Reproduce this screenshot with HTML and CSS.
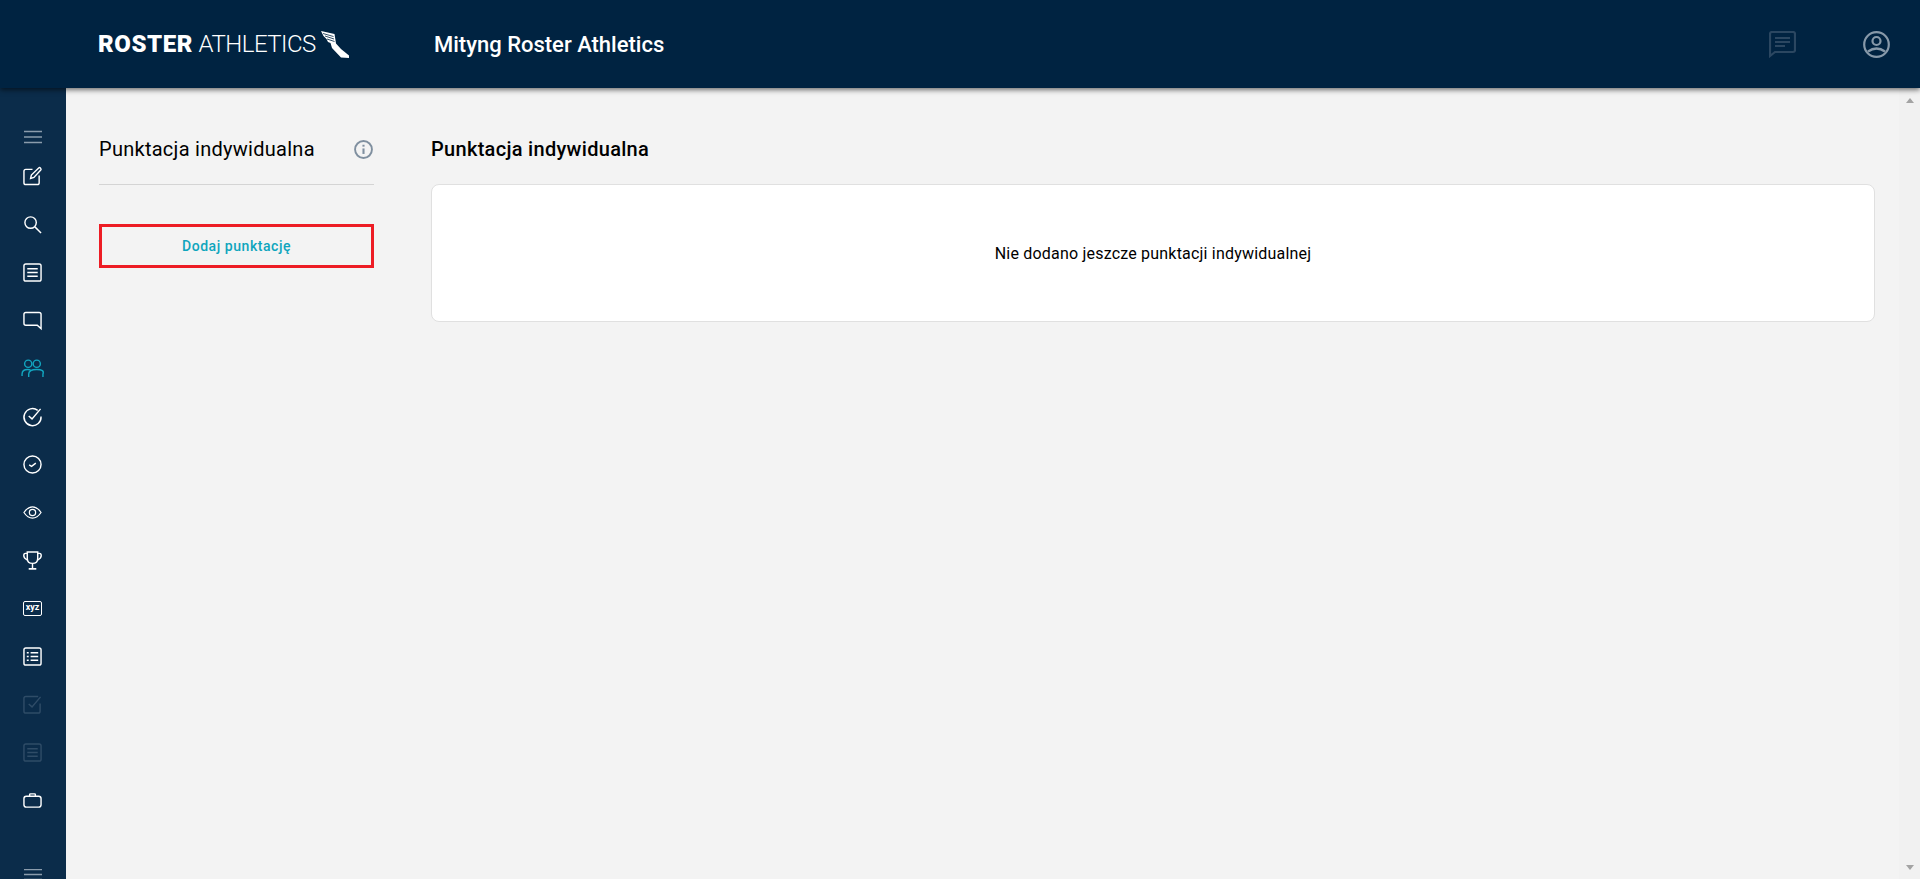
FILE: index.html
```html
<!DOCTYPE html>
<html lang="pl">
<head>
    <meta charset="UTF-8">
    <meta name="viewport" content="width=device-width, initial-scale=1.0">
    <title>Punktacja indywidualna</title>
    <link rel="stylesheet" href="styles.css">
</head>
<body>
    <header class="topbar">
        <div class="logo">
            <span class="logo-text"><b>ROSTER</b> ATHLETICS</span>
            <svg class="logo-wing" viewBox="0 0 28 27" fill="#fff">
                <path d="M0 0L13.500 3 15 12.500 20 18l8 6.500V27l-8-.5L11 17 9.500 12 7 11 5.500 8 2.500 5z"/>
                <path d="M2 2.500l10.500 3M4 5l9 3M6 8l7.500 2.500" fill="none" stroke="#002341" stroke-width=".8"/>
            </svg>
        </div>
        <div class="event-name">Mityng Roster Athletics</div>
        <div class="topbar-icons">
            <svg class="top-icon icon-dim" viewBox="0 0 27 27" fill="none" stroke="currentColor" stroke-width="2.200">
                <path d="M1 25V3q0-2 2-2h21q2 0 2 2v16q0 2-2 2H6z"/>
                <path d="M6 7h15M6 11h15M6 15h10"/>
            </svg>
            <svg class="top-icon icon-profile" viewBox="0 0 27 27" fill="none" stroke="currentColor" stroke-width="2.200">
                <circle cx="13.500" cy="13.500" r="12.300"/>
                <circle cx="13.500" cy="10" r="4"/>
                <path d="M5 20.500q8.500-6 17 0" stroke-width="2.400"/>
            </svg>
        </div>
    </header>

    <div class="layout">
        <nav class="sidebar">
            <div class="nav-item nav-toggle">
                <svg class="nav-icon icon-grey" viewBox="0 0 18 14" fill="none" stroke="currentColor" stroke-width="1.300"><path d="M0 1.500h18M0 7h18M0 12.500h18"/></svg>
            </div>
            <div class="nav-item">
                <svg class="nav-icon" viewBox="0 0 20 20" fill="none" stroke="currentColor" stroke-width="1.500"><path d="M10 2.500H3Q1 2.500 1 4.500v12q0 2 2 2h12q2 0 2-2V9"/><path d="M8 12l.8-3.500L16.500 1q1-.8 2 .2t.2 2L11.500 11z"/></svg>
            </div>
            <div class="nav-item">
                <svg class="nav-icon" viewBox="0 0 20 20" fill="none" stroke="currentColor" stroke-width="1.500"><circle cx="8" cy="8" r="6"/><path d="M12.500 12.500l6.500 6.500"/></svg>
            </div>
            <div class="nav-item">
                <svg class="nav-icon" viewBox="0 0 20 20" fill="none" stroke="currentColor" stroke-width="1.500"><rect x="1" y="1" width="18" height="18" rx="2"/><path d="M4.500 6h11M4.500 10h11M4.500 14h11"/></svg>
            </div>
            <div class="nav-item">
                <svg class="nav-icon" viewBox="0 0 20 20" fill="none" stroke="currentColor" stroke-width="1.500"><path d="M3 1.500h14q2 0 2 2V18.500L15 15H3q-2 0-2-2V3.500q0-2 2-2z"/></svg>
            </div>
            <div class="nav-item is-active">
                <svg class="nav-icon nav-icon-wide" viewBox="0 0 24 20" fill="none" stroke="currentColor" stroke-width="1.500"><circle cx="7.500" cy="5" r="3.800"/><circle cx="16.500" cy="5" r="3.800"/><path d="M1 18v-2q0-5 6-5 2 0 3 .8"/><path d="M8 19v-3q0-5 8.500-5T23 16v3"/></svg>
            </div>
            <div class="nav-item">
                <svg class="nav-icon" viewBox="0 0 20 20" fill="none" stroke="currentColor" stroke-width="1.500"><path d="M15.500 3.500a9 9 0 1 0 3.500 6.500"/><path d="M6 9.500l3.500 3L18.500 2"/></svg>
            </div>
            <div class="nav-item">
                <svg class="nav-icon" viewBox="0 0 20 20" fill="none" stroke="currentColor" stroke-width="1.500"><circle cx="10" cy="10" r="9"/><path d="M6.500 10.500l2.500 1.500 4.500-3.500" stroke-width="1.500"/></svg>
            </div>
            <div class="nav-item">
                <svg class="nav-icon" viewBox="0 0 20 14" fill="none" stroke="currentColor" stroke-width="1.300"><path d="M1 7q4-6 9-6t9 6q-4 6-9 6T1 7z"/><circle cx="10" cy="7" r="3.300"/></svg>
            </div>
            <div class="nav-item">
                <svg class="nav-icon" viewBox="0 0 20 20" fill="none" stroke="currentColor" stroke-width="1.500"><path d="M4.500 1h11v6.500q0 5.500-5.500 5.500T4.500 7.500z"/><path d="M4.500 2.500H2.500Q.8 2.500.8 5t3.900 4.500M15.500 2.500h2q1.700 0 1.700 2.500t-3.900 4.500"/><path d="M10 13v5"/><path d="M6 18.800h8" stroke-width="1.800"/></svg>
            </div>
            <div class="nav-item">
                <div class="xyz-icon">xyz</div>
            </div>
            <div class="nav-item">
                <svg class="nav-icon" viewBox="0 0 20 20" fill="none" stroke="currentColor" stroke-width="1.500"><rect x="1" y="1" width="18" height="18" rx="2"/><path d="M8 6h8M8 10h8M8 14h8"/><path d="M4 6h2M4 10h2M4 14h2" stroke-width="1.500"/></svg>
            </div>
            <div class="nav-item is-off">
                <svg class="nav-icon" viewBox="0 0 20 20" fill="none" stroke="currentColor" stroke-width="1.500"><path d="M16 1.500H3q-2 0-2 2V17q0 2 2 2h13q2 0 2-2V9"/><path d="M6 9.500l3.500 3L18.500 2"/></svg>
            </div>
            <div class="nav-item is-off">
                <svg class="nav-icon" viewBox="0 0 20 20" fill="none" stroke="currentColor" stroke-width="1.500"><rect x="1" y="1" width="18" height="18" rx="2"/><path d="M4.500 6h11M4.500 10h11M4.500 14h11"/></svg>
            </div>
            <div class="nav-item">
                <svg class="nav-icon" viewBox="0 0 20 16" fill="none" stroke="currentColor" stroke-width="1.500"><rect x="1" y="3.500" width="18" height="11.500" rx="2.500"/><path d="M7 3.500V1.800q0-.8.8-.8h4.400q.8 0 .8.8v1.700"/></svg>
            </div>
            <div class="nav-bottom">
                <svg class="nav-icon icon-grey" viewBox="0 0 18 14" fill="none" stroke="currentColor" stroke-width="1.300"><path d="M0 .700h18M0 5.500h18M0 10.500h18"/></svg>
            </div>
        </nav>

        <main class="content">
            <aside class="side-panel">
                <div class="panel-head">
                    <span class="panel-title">Punktacja indywidualna</span>
                    <svg class="info-icon" viewBox="0 0 18 18" fill="none" stroke="currentColor" stroke-width="1.800">
                        <circle cx="9" cy="9" r="8"/>
                        <path d="M9 8v5.200" stroke-width="2"/>
                        <path d="M9 4.500v1.800" stroke-width="2"/>
                    </svg>
                </div>
                <button class="add-button">Dodaj punktację</button>
            </aside>
            <section class="results">
                <h2 class="results-title">Punktacja indywidualna</h2>
                <div class="results-card">Nie dodano jeszcze punktacji indywidualnej</div>
            </section>
        </main>

        <div class="scrollbar">
            <span class="arrow-up"></span>
            <span class="arrow-down"></span>
        </div>
    </div>
</body>
</html>
```

FILE: styles.css
```css
* {
    box-sizing: border-box;
}
html, body {
    height: 100%;
}
body {
    margin: 0;
    display: flex;
    flex-direction: column;
    overflow: hidden;
    font-family: Roboto, "Liberation Sans", sans-serif;
    background-color: #f3f3f3;
    color: #000;
}

/* top bar */
.topbar {
    position: relative;
    z-index: 2;
    flex: 0 0 88px;
    display: flex;
    align-items: center;
    padding-left: 98px;
    background-color: #002341;
    color: #fff;
    box-shadow: 0 2px 5px rgba(0, 0, 0, 0.55);
}
.logo {
    width: 336px;
    display: flex;
    align-items: center;
}
.logo-text {
    font-size: 24px;
    font-weight: 300;
    letter-spacing: -0.5px;
    white-space: nowrap;
}
.logo-text b {
    font-weight: 900;
    letter-spacing: 0.6px;
}
.logo-wing {
    width: 28px;
    height: 27px;
    margin-left: 5px;
}
.event-name {
    font-size: 22px;
    font-weight: 500;
}
.topbar-icons {
    margin-left: auto;
    margin-right: 30px;
    display: flex;
    gap: 67px;
}
.top-icon {
    width: 27px;
    height: 27px;
}
.icon-dim {
    color: #2b4761;
}
.icon-profile {
    color: #8799a9;
}

/* layout */
.layout {
    flex: 1;
    min-height: 0;
    display: flex;
}
.sidebar {
    flex: 0 0 66px;
    padding: 34px 1px 0 0;
    background-color: #0b2c4a;
    color: #fff;
    overflow: hidden;
}
.nav-item {
    height: 48px;
    display: flex;
    align-items: center;
    justify-content: center;
}
.nav-toggle {
    height: 30px;
}
.nav-bottom {
    margin-top: 45px;
    display: flex;
    justify-content: center;
}
.nav-icon {
    width: 19px;
    height: 19px;
    display: block;
    overflow: visible;
}
.nav-icon-wide {
    width: 23px;
}
.nav-toggle .nav-icon, .nav-bottom .nav-icon {
    width: 18px;
    height: 14px;
}
.icon-grey {
    color: #8b9cac;
}
.is-active {
    color: #12a5bf;
}
.is-off {
    color: #2f4c67;
}
.xyz-icon {
    width: 19px;
    height: 15px;
    border: 1.5px solid #fff;
    border-radius: 2px;
    font-size: 9px;
    font-weight: 700;
    line-height: 11px;
    text-align: center;
}

/* content */
.content {
    flex: 1;
    min-width: 0;
    display: flex;
    padding: 49px 24px 0 33px;
}
.side-panel {
    flex: 0 0 275px;
    margin-right: 57px;
}
.panel-head {
    height: 48px;
    display: flex;
    align-items: flex-start;
    justify-content: space-between;
    border-bottom: 1px solid #d4d4d4;
}
.panel-title {
    font-size: 20px;
    line-height: 24px;
    letter-spacing: 0.27px;
}
.info-icon {
    width: 19px;
    height: 19px;
    margin: 3px 1px 0 0;
    color: #7f8f9f;
}
.add-button {
    display: block;
    width: 100%;
    height: 44px;
    margin-top: 39px;
    background: none;
    border: 3px solid #ed1c24;
    font-family: inherit;
    font-size: 14px;
    font-weight: 500;
    letter-spacing: 0.55px;
    color: #0ea5bd;
    cursor: pointer;
}
.results {
    flex: 1;
    min-width: 0;
}
.results-title {
    margin: 0 0 23px;
    font-size: 20px;
    line-height: 24px;
    font-weight: 500;
    letter-spacing: 0.3px;
}
.results-card {
    height: 138px;
    padding-top: 56px;
    background-color: #fff;
    border: 1px solid #e0e0e0;
    border-radius: 8px;
    font-size: 16px;
    line-height: 25px;
    letter-spacing: 0.2px;
    text-align: center;
}

/* scrollbar on the right */
.scrollbar {
    flex: 0 0 21px;
    display: flex;
    flex-direction: column;
    align-items: center;
    justify-content: space-between;
    padding: 10px 0 9px;
    background-color: #f1f1f1;
}
.arrow-up, .arrow-down {
    width: 0;
    height: 0;
    border-left: 4.500px solid transparent;
    border-right: 4.500px solid transparent;
}
.arrow-up {
    border-bottom: 5px solid #a3a3a3;
}
.arrow-down {
    border-top: 5px solid #a3a3a3;
}
```
